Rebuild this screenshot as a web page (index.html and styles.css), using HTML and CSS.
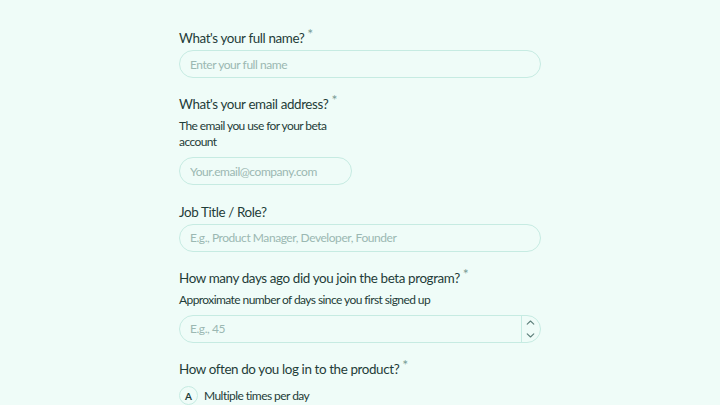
FILE: index.html
```html
<!DOCTYPE html>
<html lang="en">
<head>
<meta charset="UTF-8" />
<meta name="viewport" content="width=device-width, initial-scale=1" />
<title>Beta feedback</title>
<link rel="stylesheet" href="styles.css">
</head>
<body>

<form class="survey">
  <div class="field">
    <label class="question" for="name">What's your full name?<span class="req">*</span></label>
    <input id="name" class="text-input" type="text" placeholder="Enter your full name" />
  </div>

  <div class="field">
    <label class="question" for="email">What's your email address?<span class="req">*</span></label>
    <p class="hint narrow">The email you use for your beta account</p>
    <input id="email" class="text-input narrow" type="email" placeholder="Your.email@company.com" />
  </div>

  <div class="field">
    <label class="question" for="role">Job Title / Role?</label>
    <input id="role" class="text-input" type="text" placeholder="E.g., Product Manager, Developer, Founder" />
  </div>

  <div class="field">
    <label class="question" for="days">How many days ago did you join the beta program?<span class="req">*</span></label>
    <p class="hint">Approximate number of days since you first signed up</p>
    <div class="number-input">
      <input id="days" type="text" placeholder="E.g., 45" />
      <div class="spinner">
        <svg width="9" height="5" viewBox="0 0 9 5"><path d="M1.2 4.2 L4.5 1 L7.8 4.2" fill="none" stroke="#5d7f7a" stroke-width="1.1" stroke-linecap="round" stroke-linejoin="round"/></svg>
        <svg width="9" height="5" viewBox="0 0 9 5"><path d="M1.2 0.8 L4.5 4 L7.8 0.8" fill="none" stroke="#5d7f7a" stroke-width="1.1" stroke-linecap="round" stroke-linejoin="round"/></svg>
      </div>
    </div>
  </div>

  <div class="field">
    <div class="question">How often do you log in to the product?<span class="req">*</span></div>
    <div class="option">
      <span class="key">A</span>
      <span>Multiple times per day</span>
    </div>
  </div>
</form>

</body>
</html>
```

FILE: styles.css
```css
* {
  margin: 0; padding: 0; box-sizing: border-box;
}
html, body {
  width: 100%;
  height: 100%;
  overflow: hidden;
  background: #effcf8;
  font-family: Lato, 'Noto Sans', sans-serif;
  color: #1f3d39;
}
.survey {
  width: 362px;
  margin: 0 auto;
  padding-top: 28px;
}
.field {
  margin-bottom: 16.3px;
}
.question {
  display: block;
  font-size: 13.4px;
  letter-spacing: -0.38px;
  line-height: 20px;
  margin-bottom: 2px;
}
.req {
  position: relative;
  top: -4px;
  font-size: 14px;
  color: #7a9c96;
  margin-left: 3px;
}
.hint {
  font-size: 12px;
  letter-spacing: -0.58px;
  line-height: 16px;
  margin-top: 4px;
  margin-bottom: 7px;
}
.narrow {
  width: 173px;
}
.text-input, .number-input {
  display: block;
  width: 100%;
  height: 28px;
  border: 1px solid #c6ebe2;
  border-radius: 14px;
  background: #effcf8;
  font-family: inherit;
  font-size: 12px;
  letter-spacing: -0.45px;
  color: #1f3d39;
  padding: 0 10px;
  outline: none;
}
.text-input.narrow {
  width: 173px;
}
input::placeholder {
  color: #9bb8b2;
}
.number-input {
  display: flex;
  padding: 0 0 0 10px;
}
.number-input input {
  flex: 1;
  min-width: 0;
  border: none;
  background: transparent;
  font-family: inherit;
  font-size: 12px;
  letter-spacing: -0.45px;
  color: #1f3d39;
  outline: none;
}
.spinner {
  width: 19px;
  border-left: 1px solid #c6ebe2;
  display: flex;
  flex-direction: column;
  align-items: center;
  justify-content: center;
  gap: 8px;
  padding-right: 2px;
}
.option {
  display: flex;
  align-items: center;
  gap: 6px;
  margin-top: 7px;
  font-size: 12px;
  letter-spacing: -0.55px;
}
.key {
  width: 19px;
  height: 19px;
  border: 1px solid #c6ebe2;
  border-radius: 50%;
  display: flex;
  align-items: center;
  justify-content: center;
  font-size: 10px;
  font-weight: 700;
  letter-spacing: 0;
}
```
